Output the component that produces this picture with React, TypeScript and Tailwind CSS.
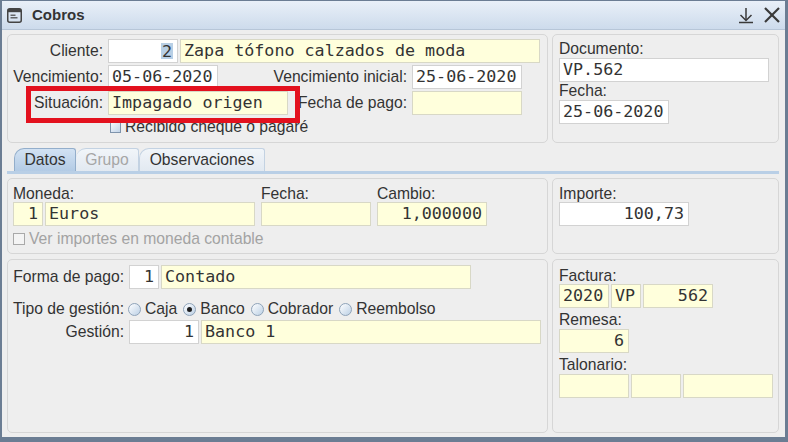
import React from "react";

function Field({
  w,
  yellow = false,
  right = false,
  children,
}: {
  w: string;
  yellow?: boolean;
  right?: boolean;
  children?: React.ReactNode;
}) {
  return (
    <div
      className={`${w} h-[24px] shrink-0 flex items-center border ${
        yellow ? "bg-[#ffffdc] border-[#d8d8c6]" : "bg-white border-[#d2d2d2]"
      } ${right ? "justify-end pr-[4px]" : "pl-[3px]"} font-['DejaVu_Sans_Mono',monospace] text-[16.7px] text-[#333333] whitespace-nowrap overflow-hidden`}
    >
      {children}
    </div>
  );
}

function Radio({ checked = false }: { checked?: boolean }) {
  return (
    <span className="w-[13px] h-[13px] rounded-full border border-[#8fa3b9] bg-gradient-to-br from-[#ffffff] to-[#bcd0e5] flex items-center justify-center shrink-0">
      {checked && <span className="w-[5px] h-[5px] rounded-full bg-[#1e1e1e]" />}
    </span>
  );
}

const panel = "rounded-[5px] border border-[#d6d6d6] bg-[#eeeeee]";

export default function App() {
  return (
    <div className="w-[788px] h-[442px] relative flex flex-col bg-[#eeeeee] border-t border-l-2 border-r-[3px] border-b-[5px] border-[#6b7d93] overflow-hidden font-['Liberation_Sans',Arial,sans-serif] text-[15.7px] text-[#333333]">
      {/* Title bar */}
      <div className="h-[29px] shrink-0 flex items-center bg-gradient-to-b from-[#e9f0f8] to-[#cddbec] border-b border-[#b7c6d8] pl-[5px] pr-[4px]">
        <svg width="15" height="15" viewBox="0 0 15 15" className="shrink-0">
          <rect x="0.75" y="0.75" width="13.5" height="13.5" rx="2" fill="none" stroke="#444" strokeWidth="1.5" />
          <rect x="1" y="1" width="13" height="3.2" fill="#444" />
          <line x1="3.5" y1="7.2" x2="8.5" y2="7.2" stroke="#444" strokeWidth="1.2" />
          <line x1="3.5" y1="9.8" x2="10.5" y2="9.8" stroke="#444" strokeWidth="1.2" />
        </svg>
        <span className="ml-[10px] font-bold text-[15px] text-[#333333]">Cobros</span>
        <div className="flex-1" />
        <svg width="16" height="17" viewBox="0 0 16 17" className="shrink-0">
          <line x1="8" y1="1" x2="8" y2="13" stroke="#3a3a3a" strokeWidth="1.5" />
          <polyline points="2.5,8 8,13.5 13.5,8" fill="none" stroke="#3a3a3a" strokeWidth="1.5" />
          <line x1="1" y1="15.5" x2="15" y2="15.5" stroke="#3a3a3a" strokeWidth="1.5" />
        </svg>
        <svg width="18" height="18" viewBox="0 0 18 18" className="ml-[9px] shrink-0">
          <line x1="2" y1="2" x2="16" y2="16" stroke="#3a3a3a" strokeWidth="2.2" />
          <line x1="16" y1="2" x2="2" y2="16" stroke="#3a3a3a" strokeWidth="2.2" />
        </svg>
      </div>

      {/* Content */}
      <div className="flex-1 flex flex-col pl-[5px] pr-[6px] pt-[4px]">
        {/* Top section */}
        <div className="flex gap-[4px] h-[109px] shrink-0">
          <div className={`${panel} w-[541px] pt-[4px] flex flex-col`}>
            <div className="flex flex-col gap-[2px]">
              <div className="flex items-center h-[24px]">
                <span className="w-[96px] text-right pr-[1px]">Cliente:</span>
                <div className="ml-[4px] flex">
                  <Field w="w-[70px]" right>
                    <span className="bg-[#b8cfe5] px-[1px] leading-[16px]">2</span>
                  </Field>
                  <div className="ml-[2px]">
                    <Field w="w-[360px]" yellow>
                      Zapa tófono calzados de moda
                    </Field>
                  </div>
                </div>
              </div>
              <div className="flex items-center h-[24px]">
                <span className="w-[96px] text-right pr-[1px] whitespace-nowrap">Vencimiento:</span>
                <div className="ml-[4px]">
                  <Field w="w-[110px]">05-06-2020</Field>
                </div>
                <span className="w-[190px] text-right pr-[1px] whitespace-nowrap">Vencimiento inicial:</span>
                <div className="ml-[4px]">
                  <Field w="w-[110px]">25-06-2020</Field>
                </div>
              </div>
              <div className="flex items-center h-[24px]">
                <span className="w-[96px] text-right pr-[1px]">Situación:</span>
                <div className="ml-[4px]">
                  <Field w="w-[180px]" yellow>
                    Impagado origen
                  </Field>
                </div>
                <span className="w-[120px] text-right pr-[1px] whitespace-nowrap">Fecha de pago:</span>
                <div className="ml-[4px]">
                  <Field w="w-[110px]" yellow />
                </div>
              </div>
            </div>
            <div className="flex items-center h-[16px] mt-[4px] pl-[102px]">
              <span className="w-[11px] h-[11px] border border-[#7f94ac] bg-gradient-to-br from-[#f5f9fd] to-[#c2d4e8] shrink-0" />
              <span className="ml-[4px] whitespace-nowrap">Recibido cheque o pagaré</span>
            </div>
          </div>
          <div className={`${panel} w-[227px] pl-[6px] pt-[5px] flex flex-col`}>
            <div className="h-[18px] leading-[18px]">Documento:</div>
            <Field w="w-[210px]">VP.562</Field>
            <div className="h-[18px] leading-[18px]">Fecha:</div>
            <Field w="w-[110px]">25-06-2020</Field>
          </div>
        </div>

        {/* Tabs */}
        <div className="mt-[5px] shrink-0">
          <div className="flex items-end h-[23px] pl-[7px]">
            <div className="w-[62px] h-[23px] flex items-center justify-center rounded-tl-[10px] rounded-tr-[3px] border border-b-0 border-[#93aecb] bg-gradient-to-b from-[#d2e2f3] to-[#b3cbe5] text-[#333333]">
              Datos
            </div>
            <div className="w-[63px] h-[23px] flex items-center justify-center rounded-tl-[10px] rounded-tr-[3px] border border-b-0 border-l-0 border-[#c3d2e2] bg-gradient-to-b from-[#f1f5f9] to-[#e2e9f1] text-[#a6a6a6]">
              Grupo
            </div>
            <div className="w-[126px] h-[23px] flex items-center justify-center rounded-tl-[10px] rounded-tr-[3px] border border-b-0 border-[#c3d2e2] bg-gradient-to-b from-[#f1f5f9] to-[#e2e9f1] text-[#333333]">
              Observaciones
            </div>
          </div>
          <div className="h-[3px] bg-[#b9cfe6]" />
        </div>

        {/* Section 2 */}
        <div className="flex gap-[4px] h-[76px] mt-[4px] shrink-0">
          <div className={`${panel} w-[541px] pt-[6px] pl-[5px] flex flex-col`}>
            <div className="flex">
              <div className="flex flex-col">
                <div className="h-[17px] leading-[17px]">Moneda:</div>
                <div className="flex gap-[2px]">
                  <Field w="w-[30px]" yellow right>
                    1
                  </Field>
                  <Field w="w-[210px]" yellow>
                    Euros
                  </Field>
                </div>
              </div>
              <div className="flex flex-col ml-[6px]">
                <div className="h-[17px] leading-[17px]">Fecha:</div>
                <Field w="w-[110px]" yellow />
              </div>
              <div className="flex flex-col ml-[6px]">
                <div className="h-[17px] leading-[17px]">Cambio:</div>
                <Field w="w-[110px]" yellow right>
                  1,000000
                </Field>
              </div>
            </div>
            <div className="flex items-center h-[14px] mt-[6px]">
              <span className="w-[12px] h-[12px] border border-[#a9a9a9] bg-[#f4f4f4] shrink-0" />
              <span className="ml-[4px] text-[#a3a3a3] whitespace-nowrap">Ver importes en moneda contable</span>
            </div>
          </div>
          <div className={`${panel} w-[227px] pl-[6px] pt-[6px] flex flex-col`}>
            <div className="h-[17px] leading-[17px]">Importe:</div>
            <Field w="w-[130px]" right>
              100,73
            </Field>
          </div>
        </div>

        {/* Section 3 */}
        <div className="flex gap-[4px] h-[174px] mt-[5px] shrink-0">
          <div className={`${panel} w-[541px] pt-[5px] flex flex-col`}>
            <div className="flex items-center h-[24px]">
              <span className="w-[116px] text-right whitespace-nowrap">Forma de pago:</span>
              <div className="ml-[5px] flex gap-[2px]">
                <Field w="w-[30px]" right>
                  1
                </Field>
                <Field w="w-[310px]" yellow>
                  Contado
                </Field>
              </div>
            </div>
            <div className="flex items-center h-[22px] mt-[9px]">
              <span className="w-[116px] text-right whitespace-nowrap">Tipo de gestión:</span>
              <div className="ml-[4px] flex items-center">
                <Radio />
                <span className="ml-[4px]">Caja</span>
                <span className="ml-[6px] flex items-center">
                  <Radio checked />
                  <span className="ml-[4px]">Banco</span>
                </span>
                <span className="ml-[6px] flex items-center">
                  <Radio />
                  <span className="ml-[4px]">Cobrador</span>
                </span>
                <span className="ml-[6px] flex items-center">
                  <Radio />
                  <span className="ml-[4px]">Reembolso</span>
                </span>
              </div>
            </div>
            <div className="flex items-center h-[24px]">
              <span className="w-[116px] text-right">Gestión:</span>
              <div className="ml-[5px] flex gap-[2px]">
                <Field w="w-[70px]" right>
                  1
                </Field>
                <Field w="w-[340px]" yellow>
                  Banco 1
                </Field>
              </div>
            </div>
          </div>
          <div className={`${panel} w-[227px] pl-[6px] pt-[7px] flex flex-col`}>
            <div className="h-[17px] leading-[17px]">Factura:</div>
            <div className="flex gap-[2px]">
              <Field w="w-[50px]" yellow>
                2020
              </Field>
              <Field w="w-[30px]" yellow>
                VP
              </Field>
              <Field w="w-[70px]" yellow right>
                562
              </Field>
            </div>
            <div className="h-[21px] pt-[3px] leading-[18px]">Remesa:</div>
            <Field w="w-[70px]" yellow right>
              6
            </Field>
            <div className="h-[21px] pt-[3px] leading-[18px]">Talonario:</div>
            <div className="flex gap-[2px]">
              <Field w="w-[70px]" yellow />
              <Field w="w-[50px]" yellow />
              <Field w="w-[90px]" yellow />
            </div>
          </div>
        </div>
      </div>

      {/* Red annotation box */}
      <div className="absolute left-[24px] top-[85px] w-[274px] h-[37px] border-[5px] border-[#e3111e] pointer-events-none" />
    </div>
  );
}
